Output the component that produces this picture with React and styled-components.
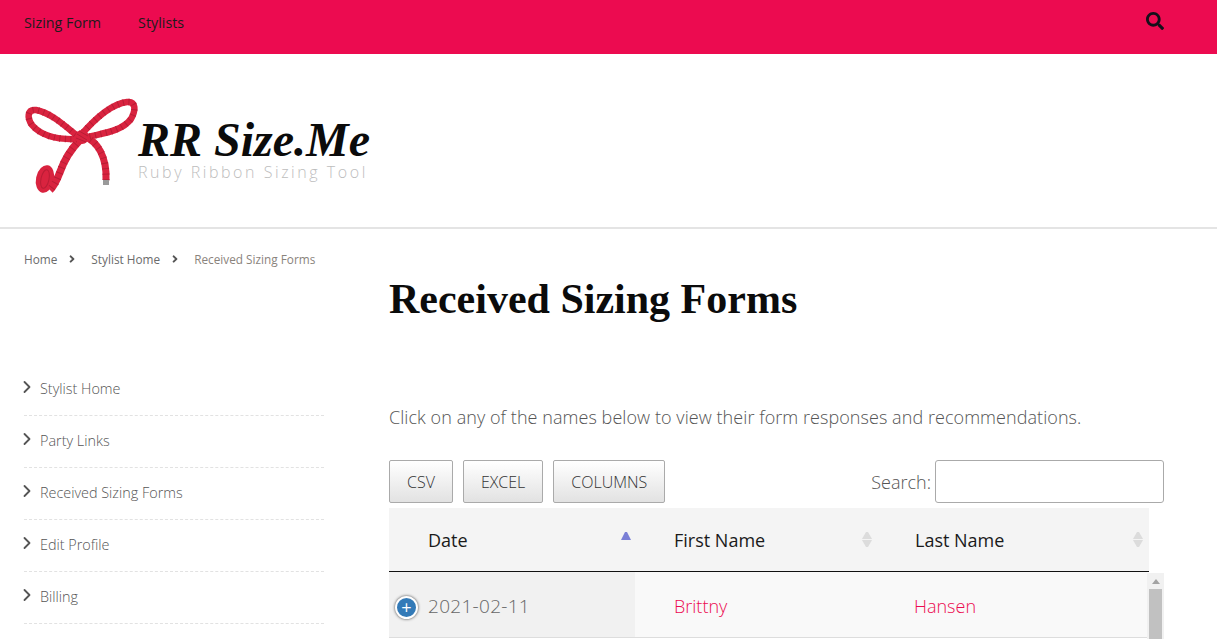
import React from 'react';
import styled, { createGlobalStyle } from 'styled-components';
import { FaSearch, FaAngleRight } from 'react-icons/fa';
import { ChevronRight } from 'lucide-react';

const GlobalStyle = createGlobalStyle`
  html, body {
    margin: 0;
    height: 639px;
    overflow: hidden;
    background: #fff;
    font-family: 'Open Sans', 'Liberation Sans', sans-serif;
  }
`;

const sideLinks = ['Stylist Home', 'Party Links', 'Received Sizing Forms', 'Edit Profile', 'Billing'];

const leftLoop = 'M80 138 C66 127 52 113 36 110 C27 109 27 118 32 125 C42 137 60 140 80 139';
const rightLoop = 'M80 136 C92 122 110 104 127 102 C136 101 136 110 131 119 C122 131 104 133 88 137';
const leftTail = 'M80 140 C72 148 65 158 60 172 C57 180 54 186 50 190';
const rightTail = 'M86 137 C97 142 107 156 106 180';

const RibbonLogo = () => (
  <svg width="114" height="100" viewBox="24 96 114 100" fill="none">
    <ellipse cx="45" cy="179" rx="9" ry="14" transform="rotate(12 45 179)" fill="#d9233f" />
    <ellipse cx="45" cy="179" rx="4" ry="9.5" transform="rotate(12 45 179)" stroke="#b81d35" strokeWidth="1" />
    <g stroke="#d9233f" strokeLinecap="butt">
      <path strokeWidth="6.5" d={leftLoop} />
      <path strokeWidth="6.5" d={rightLoop} />
      <path strokeWidth="7.5" d={leftTail} />
      <path strokeWidth="7" d={rightTail} />
    </g>
    <g stroke="#b81d35" strokeDasharray="1 4.5">
      <path strokeWidth="6.5" d={leftLoop} />
      <path strokeWidth="6.5" d={rightLoop} />
      <path strokeWidth="7.5" d={leftTail} />
      <path strokeWidth="7" d={rightTail} />
    </g>
    <circle cx="82" cy="137" r="7" fill="#d9233f" />
    <path d="M77 134 L87 140 M76 138 L86 142 M79 131 L88 136" stroke="#b81d35" strokeWidth="1" />
    <rect x="103" y="180" width="6" height="5" fill="#9a9a9a" />
  </svg>
);

const App = () => (
  <>
    <GlobalStyle />
    <TopBar>
      <NavLinks>
        <NavLink>Sizing Form</NavLink>
        <NavLink>Stylists</NavLink>
      </NavLinks>
      <SearchToggle><FaSearch size={18} /></SearchToggle>
    </TopBar>
    <Header>
      <Logo>
        <RibbonLogo />
        <LogoText>
          <LogoTitle>RR Size.Me</LogoTitle>
          <LogoTagline>Ruby Ribbon Sizing Tool</LogoTagline>
        </LogoText>
      </Logo>
    </Header>
    <Breadcrumbs>
      <Crumb>Home</Crumb>
      <CrumbSep><FaAngleRight size={12} /></CrumbSep>
      <Crumb>Stylist Home</Crumb>
      <CrumbSep><FaAngleRight size={12} /></CrumbSep>
      <Crumb $current>Received Sizing Forms</Crumb>
    </Breadcrumbs>
    <Content>
      <Sidebar>
        {sideLinks.map((link) => (
          <SideItem key={link}>
            <ChevronRight size={20} strokeWidth={2.2} />
            <span>{link}</span>
          </SideItem>
        ))}
      </Sidebar>
      <Main>
        <Title>Received Sizing Forms</Title>
        <Intro>Click on any of the names below to view their form responses and recommendations.</Intro>
        <Toolbar>
          <Buttons>
            <ToolButton>CSV</ToolButton>
            <ToolButton>EXCEL</ToolButton>
            <ToolButton>COLUMNS</ToolButton>
          </Buttons>
          <SearchField>
            Search:
            <SearchInput type="text" />
          </SearchField>
        </Toolbar>
        <HeadRow>
          <HeadCell $w={246}>Date<SortIcon $active /></HeadCell>
          <HeadCell $w={241}>First Name<SortIcon /></HeadCell>
          <HeadCell $w={273}>Last Name<SortIcon $last /></HeadCell>
        </HeadRow>
        <BodyWrap>
          <Row>
            <DateCell>
              <Expand>+</Expand>
              2021-02-11
            </DateCell>
            <NameCell $w={240}>Brittny</NameCell>
            <NameCell>Hansen</NameCell>
          </Row>
          <Scrollbar>
            <ScrollArrow />
            <ScrollThumb />
          </Scrollbar>
        </BodyWrap>
      </Main>
    </Content>
  </>
);

const SortIcon = ({ $active, $last }) => (
  <SortWrap $last={$last}>
    {$active ? (
      <ActiveArrow />
    ) : (
      <>
        <IdleUp />
        <IdleDown />
      </>
    )}
  </SortWrap>
);

const TopBar = styled.div`
  height: 54px;
  background: #ec0b50;
  display: flex;
  justify-content: space-between;
  padding: 0 53px 0 24px;
`;

const NavLinks = styled.div`
  display: flex;
  gap: 37px;
  padding-top: 13px;
`;

const NavLink = styled.a`
  font-size: 14.3px;
  line-height: 19px;
  color: #1c1c1c;
`;

const SearchToggle = styled.div`
  color: #14101a;
  padding-top: 12px;
`;

const Header = styled.div`
  height: 173px;
  border-bottom: 2px solid #e4e4e4;
  padding-left: 24px;
  display: flex;
  align-items: flex-start;
`;

const Logo = styled.div`
  display: flex;
  padding-top: 42px;
`;

const LogoText = styled.div`
  display: flex;
  flex-direction: column;
  width: 240px;
`;

const LogoTitle = styled.div`
  font-family: 'Liberation Serif', serif;
  font-style: italic;
  font-weight: 700;
  font-size: 48px;
  line-height: 48px;
  color: #0b0b0b;
  margin-top: 20px;
  white-space: nowrap;
`;

const LogoTagline = styled.div`
  font-family: 'Open Sans', sans-serif;
  font-size: 16px;
  font-weight: 300;
  line-height: 16px;
  letter-spacing: 2.55px;
  color: #bdbdbd;
  white-space: nowrap;
`;

const Breadcrumbs = styled.div`
  display: flex;
  align-items: center;
  height: 20px;
  padding: 20px 0 0 24px;
  font-size: 11.8px;
`;

const Crumb = styled.span`
  color: ${(p) => (p.$current ? '#8a837c' : '#6b6b6b')};
`;

const CrumbSep = styled.span`
  color: #555;
  display: flex;
  margin: 0 13px 0 9px;
`;

const Content = styled.div`
  display: flex;
  padding-left: 24px;
`;

const Sidebar = styled.div`
  width: 300px;
  margin-right: 65px;
  padding-top: 95px;
`;

const SideItem = styled.div`
  height: 51px;
  border-bottom: 1px dashed #e2e2e2;
  display: flex;
  align-items: flex-start;
  gap: 3px;
  font-size: 14.4px;
  font-weight: 300;
  line-height: 26px;
  color: #555;

  svg {
    color: #555;
    margin-top: 13px;
    margin-left: -7px;
  }

  span {
    margin-top: 12px;
  }
`;

const Main = styled.div`
  width: 775px;
`;

const Title = styled.h1`
  font-family: 'Liberation Serif', serif;
  font-weight: 700;
  font-size: 42px;
  line-height: 46px;
  color: #0b0b0b;
  margin: 7px 0 0;
`;

const Intro = styled.p`
  font-size: 18px;
  line-height: 24px;
  font-weight: 300;
  letter-spacing: 0.06px;
  color: #555;
  margin: 83px 0 0;
`;

const Toolbar = styled.div`
  display: flex;
  justify-content: space-between;
  margin-top: 31px;
  width: 775px;
`;

const Buttons = styled.div`
  display: flex;
  gap: 10px;
`;

const ToolButton = styled.button`
  height: 43px;
  padding: 0 17px;
  border: 1px solid #aaa;
  border-radius: 2px;
  background: linear-gradient(to bottom, #fff, #e2e2e2);
  font-family: inherit;
  font-size: 16px;
  font-weight: 300;
  color: #333;
`;

const SearchField = styled.label`
  display: flex;
  align-items: center;
  gap: 4px;
  font-size: 18px;
  font-weight: 300;
  color: #555;
`;

const SearchInput = styled.input`
  box-sizing: border-box;
  width: 229px;
  height: 43px;
  border: 1px solid #aaa;
  border-radius: 3px;
  background: #fff;
`;

const HeadRow = styled.div`
  display: flex;
  width: 760px;
  height: 63px;
  margin-top: 5px;
  background: #f4f4f4;
  border-bottom: 1px solid #111;
`;

const HeadCell = styled.div`
  position: relative;
  box-sizing: border-box;
  width: ${(p) => p.$w}px;
  padding-left: 39px;
  line-height: 65px;
  font-size: 18px;
  color: #1a1a1a;
`;

const SortWrap = styled.span`
  position: absolute;
  top: 24px;
  right: ${(p) => (p.$last ? '6px' : '4px')};
  display: flex;
  flex-direction: column;
  gap: 1px;
  width: 10px;
`;

const ActiveArrow = styled.i`
  border: 4.5px solid transparent;
  border-top: 0;
  border-bottom: 8px solid #7a7fd6;
`;

const IdleUp = styled.i`
  border: 4.5px solid transparent;
  border-top: 0;
  border-bottom: 7px solid #dcdcdc;
`;

const IdleDown = styled.i`
  border: 4.5px solid transparent;
  border-bottom: 0;
  border-top: 7px solid #dcdcdc;
`;

const BodyWrap = styled.div`
  display: flex;
  width: 775px;
`;

const Row = styled.div`
  display: flex;
  width: 758px;
  height: 65px;
  border-bottom: 1px solid #ddd;
  background: #f9f9f9;
  font-size: 18px;
  font-weight: 300;
  line-height: 68px;
`;

const DateCell = styled.div`
  position: relative;
  box-sizing: border-box;
  width: 246px;
  padding-left: 39px;
  background: #f1f1f1;
  color: #666;
  font-size: 19px;
  letter-spacing: 0.3px;
`;

const Expand = styled.span`
  position: absolute;
  left: 6px;
  top: 24px;
  box-sizing: border-box;
  width: 23px;
  height: 23px;
  border: 2px solid #fff;
  border-radius: 50%;
  background: #337ab7;
  box-shadow: 0 0 3px #444;
  color: #fff;
  font-size: 18px;
  font-weight: 400;
  letter-spacing: 0;
  line-height: 18px;
  text-align: center;
`;

const NameCell = styled.div`
  box-sizing: border-box;
  width: ${(p) => (p.$w ? `${p.$w}px` : 'auto')};
  padding-left: 39px;
  color: #ec0b50;
`;

const Scrollbar = styled.div`
  width: 17px;
  height: 70px;
  margin-top: 1px;
  background: #f1f1f1;
`;

const ScrollArrow = styled.div`
  width: 0;
  margin: 6px auto 0;
  border: 4px solid transparent;
  border-top: 0;
  border-bottom: 5px solid #a3a3a3;
`;

const ScrollThumb = styled.div`
  width: 13px;
  height: 60px;
  margin: 5px auto 0;
  background: #c1c1c1;
`;

export default App;
